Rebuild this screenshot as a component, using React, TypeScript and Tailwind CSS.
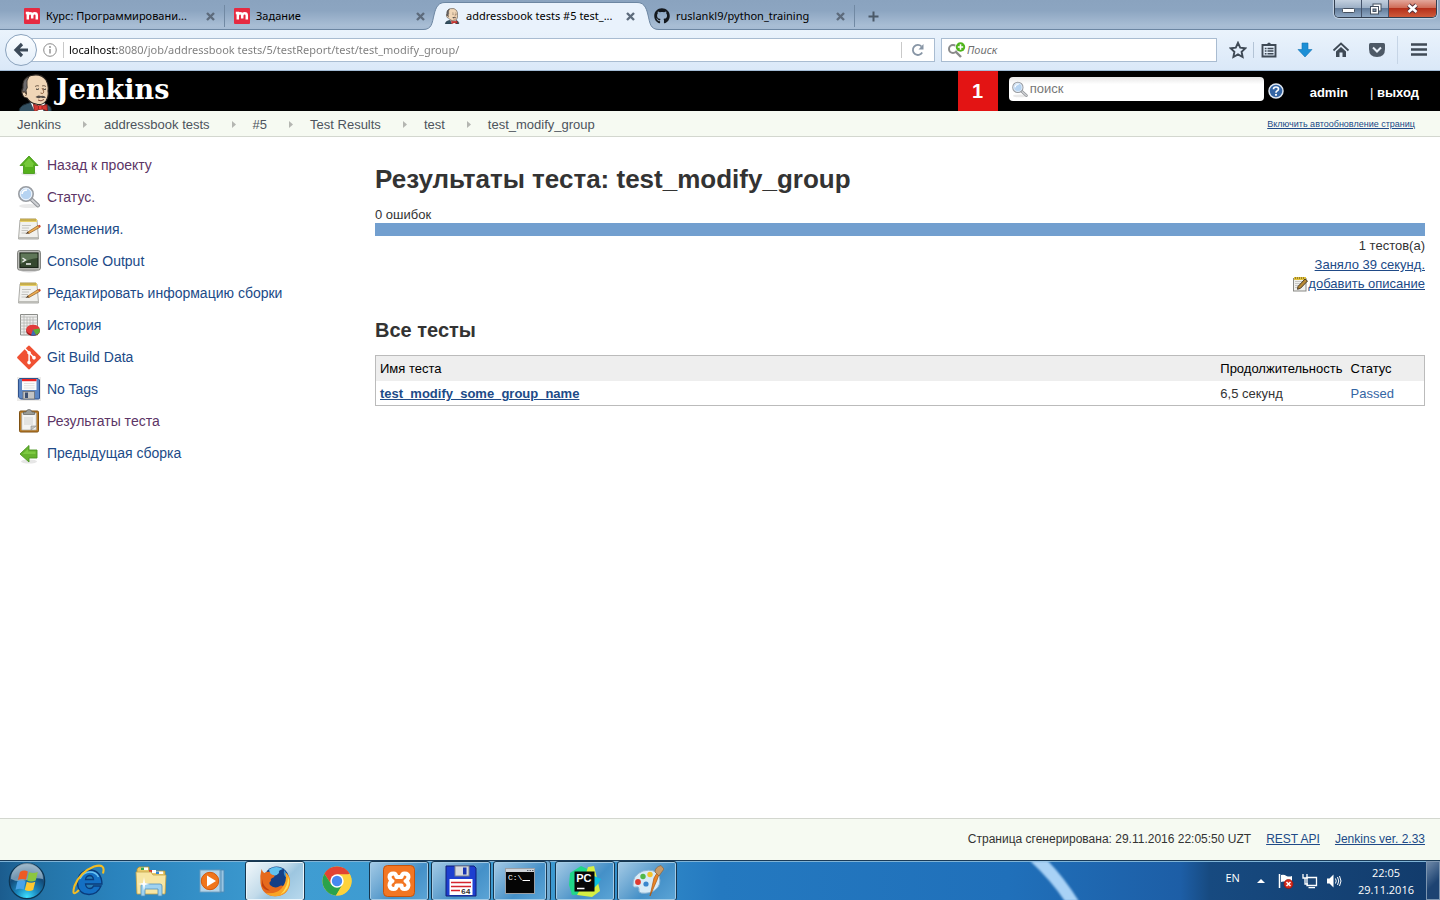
import type { ReactNode } from 'react';
import { FaGithub, FaGitAlt } from 'react-icons/fa';

/* ---------- Shared drawings ---------- */

function Butler({ className }: { className: string }) {
  return (
    <svg viewBox="0 0 34 38" className={className} aria-hidden="true">
      <path d="M1 38 Q1 32 8 30 L14 28 L24 28 L30 31 Q34 33 33 38Z" fill="#335061" stroke="#1b2a33" strokeWidth="1" />
      <path d="M12 27 L17 38 H25 L27 28Z" fill="#fff" />
      <path d="M5 14 Q4 4 13 1.500 Q23 -1 28 6 Q31 11 30 17 Q31 23 28 27 Q24 32 18 30 Q12 29 9 24 Q5 24 4 19 Q3 16 5 14Z" fill="#f0d6b7" stroke="#2a2420" strokeWidth="1.100" />
      <path d="M5 14 Q4 5 11 2.500 Q8 7 9 11 Q10 14 8 16 L8.500 20 Q6 17 5 18 Q3.500 17 5 14Z" fill="#6d6b6d" stroke="#2a2420" strokeWidth=".8" />
      <path d="M4.500 18.500 Q6.500 16.500 8 19 Q9 21 7.500 22" fill="none" stroke="#5b4636" strokeWidth=".9" />
      <path d="M17 12.500 Q19 11 21 12 M24 12 Q26 11 28 12.500" fill="none" stroke="#5b4636" strokeWidth=".8" />
      <path d="M18 15 Q19.500 16 21 14.800 M25 14.800 Q26.500 16 28 15" fill="none" stroke="#222" strokeWidth="1" />
      <path d="M24 14 Q27 18.500 24.500 19.500 L22.500 19" fill="none" stroke="#8a5c3c" strokeWidth="1" />
      <path d="M17.500 23 Q20 20.500 23 22 Q26 21 28 23.500 Q25 24.500 23 23.500 Q20 25 17.500 23Z" fill="#554d48" />
      <path d="M20 26 Q23 28 26 25.500" fill="none" stroke="#7a3b2e" strokeWidth=".9" />
      <path d="M15.500 30 L22 32.500 L29 30.500 L29.500 37 L22.500 34.500 L16.500 38Z" fill="#d33833" stroke="#7d1512" strokeWidth=".8" />
      <rect x="20.500" y="31.500" width="3.500" height="4" rx="1" fill="#ef3d3a" stroke="#7d1512" strokeWidth=".6" />
    </svg>
  );
}

function CourseIcon() {
  return (
    <svg viewBox="0 0 16 16" className="h-4 w-4" aria-hidden="true">
      <rect width="16" height="16" rx="1" fill="#e62a41" />
      <path d="M1.800 5 H3.800 V11.500 M3.800 7.500 Q4.300 5.300 6 5.300 Q8.200 5.300 8.200 7.500 V10.500 M8.200 7.500 Q8.700 5.300 10.700 5.300 Q12.800 5.300 12.800 7.500 V11.500" fill="none" stroke="#fff" strokeWidth="2.500" />
    </svg>
  );
}

function CloseMark() {
  return (
    <svg viewBox="0 0 9 9" className="h-[9px] w-[9px]" aria-hidden="true">
      <path d="M1 1 L8 8 M8 1 L1 8" stroke="#5d6b7c" strokeWidth="2.400" />
    </svg>
  );
}

/* ---------- Browser chrome ---------- */

function Tab({ title, icon, active = false, divider = false }: { title: string; icon: ReactNode; active?: boolean; divider?: boolean }) {
  return (
    <div className="relative flex h-[30px] w-[210px] shrink items-center pb-px pl-[9px] pr-[10px] pt-[3px]">
      {active && (
        <svg viewBox="0 0 236 30" preserveAspectRatio="none" className="absolute -left-3 top-0 h-[30px] w-[236px] max-w-none" aria-hidden="true">
          <path d="M0 30 V29.500 C9 29.500 9 23 11 15 C13 6 16 2.500 22 2.500 H214 C220 2.500 223 6 225 15 C227 23 227 29.500 236 29.500 V30Z" fill="#e9f2fc" />
          <path d="M0 29.500 C9 29.500 9 23 11 15 C13 6 16 2.500 22 2.500 H214 C220 2.500 223 6 225 15 C227 23 227 29.500 236 29.500" fill="none" stroke="#6c86a2" />
        </svg>
      )}
      <a href="#tab" className="relative flex min-w-0 flex-1 items-center gap-1.5">
        <span className="flex h-4 w-4 shrink-0 justify-center">{icon}</span>
        <span className="whitespace-nowrap">{title}</span>
      </a>
      <button aria-label={`Закрыть ${title}`} className="relative ml-2 shrink-0">
        <CloseMark />
      </button>
      {divider && <span className="absolute bottom-[3px] right-0 top-[5px] w-px bg-[#7189a3]" />}
    </div>
  );
}

function WindowControls() {
  return (
    <div className="ml-auto mr-[3px] flex h-[18px] shrink-0 self-start overflow-hidden rounded-b-[5px] border border-t-0 border-[#333f50] shadow-[0_0_1px_1px_#c6d5e5]">
      <button aria-label="Свернуть" className="flex w-[27px] items-center justify-center border-r border-[#45536a] bg-[linear-gradient(#c3d0df,#9db0c6_45%,#637c9a_50%,#90a9c5)]">
        <svg viewBox="0 0 13 6" className="mt-1 h-1.5 w-[13px]" aria-hidden="true"><rect x=".5" y=".5" width="12" height="4" rx="1" fill="#fff" stroke="#45505f" /></svg>
      </button>
      <button aria-label="Развернуть" className="flex w-[27px] items-center justify-center border-r border-[#45536a] bg-[linear-gradient(#c3d0df,#9db0c6_45%,#637c9a_50%,#90a9c5)]">
        <svg viewBox="0 0 13 12" className="h-3 w-[13px]" aria-hidden="true">
          <rect x="4" y="1" width="8" height="7" fill="#fff" stroke="#45505f" />
          <rect x="1.500" y="3.500" width="8" height="7.500" fill="#fff" stroke="#45505f" />
          <rect x="4" y="6" width="3" height="2.500" fill="#8297b2" stroke="#45505f" />
        </svg>
      </button>
      <button aria-label="Закрыть" className="flex w-[47px] items-center justify-center bg-[linear-gradient(#e3a79b,#cf6d58_45%,#b5301a_50%,#cf5a3a)]">
        <svg viewBox="0 0 13 11" className="h-[11px] w-[13px]" aria-hidden="true">
          <path d="M2.500 2 L10.500 9 M10.500 2 L2.500 9" stroke="#53303a" strokeWidth="4.400" />
          <path d="M2.500 2 L10.500 9 M10.500 2 L2.500 9" stroke="#fff" strokeWidth="2.600" />
        </svg>
      </button>
    </div>
  );
}

function TabStrip() {
  return (
    <div className="flex h-[30px] bg-[linear-gradient(#8aa3bf,#8ca5c1_35%,#a8bdd4_85%,#a5bbd3)] pl-[15px] shadow-[inset_0_-1px_0_#6c86a2]">
      <Tab title="Курс: Программировани..." icon={<CourseIcon />} divider />
      <Tab title="Задание" icon={<CourseIcon />} />
      <Tab title="addressbook tests #5 test_..." icon={<Butler className="h-4 w-4" />} active />
      <Tab title="ruslankl9/python_training" icon={<FaGithub className="h-4 w-4 text-[#14181d]" />} divider />
      <button aria-label="Новая вкладка" className="flex w-9 shrink-0 items-center justify-center pt-0.5">
        <svg viewBox="0 0 11 11" className="h-[11px] w-[11px]" aria-hidden="true"><path d="M5.500 0.500 V10.500 M.5 5.500 H10.500" stroke="#4b5968" strokeWidth="2" /></svg>
      </button>
      <WindowControls />
    </div>
  );
}

function ToolButton({ label, children }: { label: string; children: ReactNode }) {
  return (
    <button aria-label={label} className="flex h-[30px] w-9 items-center justify-center">
      <svg viewBox="0 0 18 18" className="h-[18px] w-[18px]" aria-hidden="true">{children}</svg>
    </button>
  );
}

function Toolbar() {
  return (
    <div className="flex h-[41px] items-center border-b border-[#a3bcd6] bg-[linear-gradient(#eaf3fc,#dae8f8)] pl-[5px]">
      <button aria-label="Назад" className="relative z-10 flex h-8 w-8 shrink-0 items-center justify-center rounded-full border border-[#8ba3bd] bg-[linear-gradient(#fbfdff,#e3eefa)]">
        <svg viewBox="0 0 16 16" className="h-4 w-4" aria-hidden="true"><path d="M9 2 L3 8 L9 14 M3.500 8 H15" fill="none" stroke="#3c4a59" strokeWidth="3.200" /></svg>
      </button>
      <div className="-ml-1.5 flex h-6 min-w-0 flex-1 items-center border border-[#a9bcd1] bg-white pl-[11px]">
        <svg viewBox="0 0 14 14" className="h-3.5 w-3.5 shrink-0" aria-hidden="true">
          <circle cx="7" cy="7" r="6.300" fill="none" stroke="#8b8b8b" />
          <path d="M7 6 V10.500" stroke="#8b8b8b" strokeWidth="1.400" />
          <circle cx="7" cy="4" r=".9" fill="#8b8b8b" />
        </svg>
        <span className="ml-1.5 mr-[5px] h-4 w-px shrink-0 bg-[#c9c9c9]" />
        <input
          aria-label="Адрес"
          defaultValue="localhost:8080/job/addressbook tests/5/testReport/test/test_modify_group/"
          className="min-w-0 flex-1 bg-[linear-gradient(90deg,#000_49px,#7b7b7b_49px)] bg-clip-text text-transparent outline-none"
        />
        <button aria-label="Обновить" className="flex h-4 w-[33px] shrink-0 items-center justify-center border-l border-[#c9c9c9]">
          <svg viewBox="0 0 14 14" className="h-3.5 w-3.5" aria-hidden="true">
            <path d="M11.200 9.500 A5 5 0 1 1 10.500 3.500" fill="none" stroke="#8795a5" strokeWidth="1.800" />
            <path d="M12.500 1 V6.500 H7.500Z" fill="#8795a5" />
          </svg>
        </button>
      </div>
      <div className="ml-1.5 flex h-6 w-[276px] shrink-0 items-center border border-[#a9bcd1] bg-white pl-1.5">
        <svg viewBox="0 0 18 17" className="h-[17px] w-[18px] shrink-0" aria-hidden="true">
          <circle cx="5" cy="7" r="4" fill="none" stroke="#8a8a8a" strokeWidth="2" />
          <path d="M8 10 L13 15" stroke="#8a8a8a" strokeWidth="2.400" />
          <circle cx="12.500" cy="5" r="5.400" fill="#fff" />
          <circle cx="12.500" cy="5" r="4.700" fill="#4fb51c" />
          <path d="M12.500 2.300 V7.700 M9.800 5 H15.200" stroke="#fff" strokeWidth="1.600" />
        </svg>
        <input aria-label="Поиск в интернете" placeholder="Поиск" className="min-w-0 flex-1 pl-px italic outline-none placeholder:text-[#6f6f6f]" />
      </div>
      <div className="ml-[3px] flex shrink-0 items-center">
        <ToolButton label="Закладка">
          <path d="M9 1.800 L11.200 6.600 L16.400 7.200 L12.600 10.800 L13.600 16 L9 13.400 L4.400 16 L5.400 10.800 L1.600 7.200 L6.800 6.600Z" fill="none" stroke="#3f4a56" strokeWidth="1.900" />
        </ToolButton>
        <span className="-mx-[3px] h-4 w-px bg-[#b3c4d6]" />
        <ToolButton label="Список закладок">
          <path d="M2.500 4 H15.500 V15.500 H2.500Z" fill="none" stroke="#3f4a56" strokeWidth="1.900" />
          <path d="M5 4.500 V3 H7 Q9 0 11 3 H13 V4.500Z" fill="#3f4a56" />
          <path d="M4.800 7.500 H6.500 M7.500 7.500 H13.500 M4.800 10 H6.500 M7.500 10 H13.500 M4.800 12.700 H6.500 M7.500 12.700 H13.500" stroke="#3f4a56" strokeWidth="1.400" />
        </ToolButton>
        <ToolButton label="Загрузки"><path d="M6 2 H12 V8.500 H16 L9 16 L2 8.500 H6Z" fill="#1c8fd6" stroke="#1273b3" strokeWidth=".6" /></ToolButton>
        <ToolButton label="Домой">
          <path d="M1.500 9.500 L9 2.500 L16.500 9.500" fill="none" stroke="#3f4a56" strokeWidth="1.800" />
          <path d="M4 10.500 L9 6 L14 10.500 V16 H10.500 V11.500 H7.500 V16 H4Z" fill="#3f4a56" />
        </ToolButton>
        <ToolButton label="Pocket">
          <path d="M2.500 2 H15.500 Q17 2 17 3.500 V8 Q17 16 9 16 Q1 16 1 8 V3.500 Q1 2 2.500 2Z" fill="#4d5966" />
          <path d="M5 6.500 L9 10.500 L13 6.500" fill="none" stroke="#e8f0f9" strokeWidth="2" />
        </ToolButton>
        <span className="ml-0.5 mr-[3px] h-7 w-px bg-[#c6d5e6]" />
        <ToolButton label="Меню"><path d="M1 3.500 H17 M1 8.500 H17 M1 13.500 H17" stroke="#3f4a56" strokeWidth="2.400" /></ToolButton>
        <span className="w-[3px]" />
      </div>
    </div>
  );
}

/* ---------- Jenkins page ---------- */

function Magnifier({ className }: { className: string }) {
  return (
    <svg viewBox="0 0 24 24" className={className} aria-hidden="true">
      <ellipse cx="12" cy="21" rx="10" ry="2" fill="#e9e9e9" />
      <path d="M14 14 L21 20.500" stroke="#8f9297" strokeWidth="4" strokeLinecap="round" />
      <path d="M14 14 L21 20.500" stroke="#d0d2d5" strokeWidth="2" strokeLinecap="round" />
      <circle cx="9" cy="9" r="7.200" fill="#c7def5" stroke="#9a9da2" strokeWidth="1.600" />
      <circle cx="9" cy="9" r="5.700" fill="#b6d3f1" stroke="#eef4fb" strokeWidth="1" />
      <path d="M5 9 Q5.500 5 10 5" fill="none" stroke="#fff" strokeWidth="1.500" />
    </svg>
  );
}

function Notepad({ className }: { className: string }) {
  return (
    <svg viewBox="0 0 24 24" className={className} aria-hidden="true">
      <path d="M3 3 H20 L21.500 22 H1.500Z" fill="#f1f1ee" stroke="#a3a39e" strokeWidth=".9" />
      <path d="M1.800 20 H21.200 V22 H1.700Z" fill="#bdbdb8" />
      <rect x="3" y="2" width="17" height="3" fill="#e6cf67" />
      <path d="M4 1 V4 M6 1 V4 M8 1 V4 M10 1 V4 M12 1 V4 M14 1 V4 M16 1 V4 M18 1 V4" stroke="#94792a" strokeWidth=".8" />
      <path d="M5 8.500 H14 M5 11 H12 M4.500 13.500 H11 M4.500 16 H9" stroke="#c4c4c0" strokeWidth="1" />
      <path d="M10 15.500 L21 8.500 L22.500 10.500 L12 16.500Z" fill="#efae55" stroke="#8b5a1e" strokeWidth=".7" />
      <path d="M21 8.500 L22.500 7.800 Q24 8.800 23.700 9.900 L22.500 10.500Z" fill="#cf4a2c" />
      <path d="M8.500 17 L10.500 14.800 L12.300 16.300Z" fill="#4e3a26" />
    </svg>
  );
}

function SmallNotepad() {
  return (
    <svg viewBox="0 0 15 16" className="h-4 w-[15px]" aria-hidden="true">
      <rect x=".5" y="2.500" width="12.500" height="12.500" fill="#f0f0ee" stroke="#8a8a86" />
      <path d="M2 5.500 H10 M2 7.500 H9 M2 9.500 H7 M2 11.500 H6" stroke="#bdbdb9" strokeWidth=".8" />
      <rect x="1" y="1" width="12" height="3" fill="#e2c33f" />
      <path d="M2.500 1 V3 M4.500 1 V3 M6.500 1 V3 M8.500 1 V3 M10.500 1 V3" stroke="#8b7220" strokeWidth=".8" />
      <path d="M5 10.500 L12 3 L14.500 5 L7.500 12.300 L4.500 13.300Z" fill="#b98a35" stroke="#3b2d17" strokeWidth=".9" />
    </svg>
  );
}

function ConsoleIcon() {
  return (
    <svg viewBox="0 0 24 24" className="h-6 w-6" aria-hidden="true">
      <ellipse cx="12" cy="22" rx="8" ry="1.500" fill="#d8d8d8" />
      <rect x=".6" y="1.600" width="22.800" height="19.500" rx="2" fill="#c4c5c0" stroke="#797a76" strokeWidth="1" />
      <rect x="3" y="4" width="18" height="14.500" fill="#35482f" stroke="#1c2519" strokeWidth="1.200" />
      <path d="M3.600 4.600 H20.400 V9 Q11 10 3.600 15Z" fill="#5f7758" />
      <path d="M5.500 9 L8.500 11 L5.500 13 M9 15 H14" fill="none" stroke="#f4f4f4" strokeWidth="1.300" />
    </svg>
  );
}

function HistoryIcon() {
  return (
    <svg viewBox="0 0 24 24" className="h-6 w-6" aria-hidden="true">
      <path d="M3.500 1.500 H20.500 V22 H3.500Z" fill="#efefee" stroke="#8b8d89" />
      <path d="M3.500 4 H20.500 M7 1.500 V22 M10 4 V22 M13 4 V22 M16 4 V22 M3.500 7 H20.500 M3.500 10 H20.500 M3.500 13 H20.500 M3.500 16 H20.500 M3.500 19 H20.500" stroke="#b2b4b0" strokeWidth=".8" />
      <ellipse cx="16" cy="18" rx="6.800" ry="5" fill="#9a1616" />
      <ellipse cx="16" cy="16.500" rx="6.800" ry="4.800" fill="#e23b3b" />
      <path d="M16 16.500 L22.500 15.500 A6.300 5 0 0 1 19 22Z" fill="#5fae35" />
      <path d="M16 16.500 L19 22 A6 5 0 0 1 14 22.500Z" fill="#3b6cb5" />
    </svg>
  );
}

function FloppyIcon() {
  return (
    <svg viewBox="0 0 24 24" className="h-6 w-6" aria-hidden="true">
      <rect width="24" height="24" fill="#ecebe9" />
      <path d="M2.500 1.500 H21 L22.500 3 V21 Q22.500 22 21.500 22 H3.500 L1.500 20 V2.500Z" fill="#5d87c4" stroke="#2f518c" />
      <rect x="5" y="2" width="14.500" height="11" fill="#fbfbfb" />
      <rect x="5" y="2" width="14.500" height="2.200" fill="#ee2222" />
      <path d="M7 6.500 H17.500 M7 8.700 H17.500 M7 11 H17.500" stroke="#dedede" strokeWidth=".9" />
      <rect x="6" y="14.500" width="11.500" height="7.500" fill="#c3c4c4" stroke="#6e7174" strokeWidth=".8" />
      <rect x="8" y="15.500" width="3" height="5.500" fill="#3c4f71" />
    </svg>
  );
}

function ClipboardIcon() {
  return (
    <svg viewBox="0 0 24 24" className="h-6 w-6" aria-hidden="true">
      <rect x="2.500" y="2" width="19" height="21" rx="1.200" fill="#bd7d26" stroke="#7f5112" />
      <path d="M4.700 4 H19.300 V21 H4.700Z" fill="#f4f4f3" stroke="#a4a49f" strokeWidth=".7" />
      <path d="M7 8 H16 V16 H7Z" fill="#e3e3e1" />
      <path d="M14 21 V17 H19.300Z" fill="#c4c4c0" stroke="#8e8e8a" strokeWidth=".6" />
      <path d="M6.500 3 H9 Q9.500 .5 12 .5 Q14.500 .5 15 3 H17.500 V5.500 H6.500Z" fill="#9a9c97" stroke="#5d5f5b" strokeWidth=".7" />
    </svg>
  );
}

function GreenArrow({ left = false }: { left?: boolean }) {
  return (
    <svg viewBox="0 0 24 24" className="h-6 w-6" aria-hidden="true">
      <ellipse cx="12" cy="20.500" rx="8" ry="2" fill="#e6e6e6" />
      {left ? (
        <path d="M3 13 L12 4.500 V9 H20 V17 H12 V21Z" fill="#66b32e" stroke="#4a9420" strokeWidth=".9" />
      ) : (
        <path d="M12 3 L21 12.500 H17.500 V20.500 H6.500 V12.500 H3Z" fill="#55b01c" stroke="#4b9b1e" strokeWidth=".9" />
      )}
      <path d={left ? 'M5.500 13 L11 8 V10.500 H18.500 V13Z' : 'M12 5 L17.500 11.500 H16 V14 H8 V11.500 H6Z'} fill="#8cd84f" fillOpacity=".6" />
    </svg>
  );
}

function GitIcon() {
  return <FaGitAlt className="h-[27px] w-6 shrink-0 text-[#f05133]" />;
}

const tasks: { label: string; icon: ReactNode; visited?: boolean }[] = [
  { label: 'Назад к проекту', icon: <GreenArrow />, visited: true },
  { label: 'Статус.', icon: <Magnifier className="h-6 w-6" />, visited: true },
  { label: 'Изменения.', icon: <Notepad className="h-6 w-6" /> },
  { label: 'Console Output', icon: <ConsoleIcon /> },
  { label: 'Редактировать информацию сборки', icon: <Notepad className="h-6 w-6" /> },
  { label: 'История', icon: <HistoryIcon /> },
  { label: 'Git Build Data', icon: <GitIcon /> },
  { label: 'No Tags', icon: <FloppyIcon /> },
  { label: 'Результаты теста', icon: <ClipboardIcon />, visited: true },
  { label: 'Предыдущая сборка', icon: <GreenArrow left /> },
];

const crumbs = ['Jenkins', 'addressbook tests', '#5', 'Test Results', 'test', 'test_modify_group'];

function PageHeader() {
  return (
    <header className="flex h-10 shrink-0 items-center bg-black pl-[18px] text-[13px] font-bold text-white">
      <a href="#home" className="flex h-10 items-center overflow-hidden font-['DejaVu_Serif',serif] text-[27px] leading-10">
        <Butler className="mt-1 h-[38px] w-[34px]" />
        <span className="ml-1 pb-0.5">Jenkins</span>
      </a>
      <a href="#alerts" className="ml-auto flex h-10 w-10 items-center justify-center bg-[#e31414] text-xl">1</a>
      <form className="ml-[11px] flex items-center pb-1" onSubmit={(e) => e.preventDefault()}>
        <label className="flex h-6 w-[255px] items-center rounded bg-[linear-gradient(#e6e6e6,#fff_30%)] pl-0.5">
          <Magnifier className="h-[17px] w-[18px]" />
          <input aria-label="поиск" placeholder="поиск" className="min-w-0 flex-1 pl-px font-normal text-black outline-none placeholder:text-[#777]" />
        </label>
      </form>
      <a href="#help" aria-label="Справка" className="ml-1">
        <svg viewBox="0 0 16 16" className="h-4 w-4" aria-hidden="true">
          <circle cx="8" cy="8" r="7" fill="#3465a4" stroke="#dfe7f2" strokeWidth="1.500" />
          <path d="M5.500 6.300 Q5.500 4 8 4 Q10.500 4 10.500 6 Q10.500 7.200 9 8 Q8 8.500 8 9.700" fill="none" stroke="#fff" strokeWidth="1.700" />
          <circle cx="8" cy="11.800" r="1.100" fill="#fff" />
        </svg>
      </a>
      <a href="#admin" className="ml-[26px] pt-1">admin</a>
      <span className="ml-[22px] mr-[21px] pt-1"><span className="font-normal">|</span> <a href="#logout">выход</a></span>
    </header>
  );
}

function Breadcrumbs() {
  return (
    <nav aria-label="Навигация" className="flex h-[26px] shrink-0 items-center border-b border-[#d3d7cf] bg-[#f6faf2] pl-[17px] pr-[25px] pt-0.5 text-[13px] text-[#4d545d]">
      <ol className="flex">
        {crumbs.map((crumb, i) => (
          <li key={crumb} className="flex items-center">
            {i > 0 && (
              <svg viewBox="0 0 5 7" className="ml-[22px] mr-4 h-[7px] w-[5px]" aria-hidden="true"><path d="M0 0 L4 3.500 L0 7Z" fill="#b4b6b1" /></svg>
            )}
            <a href="#crumb">{crumb}</a>
          </li>
        ))}
      </ol>
      <a href="#refresh" className="ml-auto text-[9px] text-[#204a87] underline">Включить автообновление страниц</a>
    </nav>
  );
}

function Results() {
  return (
    <main className="min-w-0 flex-1 pr-[15px] text-[13px] leading-[19px] text-[#333]">
      <h1 className="pt-[27px] text-[26px] font-bold leading-[30px]">Результаты теста: test_modify_group</h1>
      <p className="mt-3 text-[13px] leading-[17px]">0 ошибок</p>
      <div className="h-[13px] bg-[#729fcf]" />
      <div className="flex flex-col items-end">
        <p>1 тестов(а)</p>
        <a href="#duration" className="text-[#204a87] underline">Заняло 39 секунд.</a>
        <a href="#describe" className="flex items-center text-[#204a87] underline">
          <SmallNotepad />
          добавить описание
        </a>
      </div>
      <h2 className="mt-[25px] text-xl font-bold leading-6">Все тесты</h2>
      <table className="mt-[13px] w-full border border-[#bbb] text-left">
        <thead className="bg-[#eee] text-black">
          <tr className="h-[25px]">
            <th className="px-1 font-normal">Имя теста</th>
            <th className="w-32 px-1 font-normal">Продолжительность</th>
            <th className="w-[78px] px-1 font-normal">Статус</th>
          </tr>
        </thead>
        <tbody>
          <tr className="h-[25px]">
            <td className="px-1 pt-0.5"><a href="#test" className="font-bold text-[#204a87] underline">test_modify_some_group_name</a></td>
            <td className="px-1 pt-0.5">6,5 секунд</td>
            <td className="px-1 pt-0.5 text-[#3465a4]">Passed</td>
          </tr>
        </tbody>
      </table>
    </main>
  );
}

/* ---------- Desktop taskbar ---------- */

function StartOrb() {
  return (
    <svg viewBox="0 0 38 38" className="h-[38px] w-[38px]" aria-hidden="true">
      <defs>
        <radialGradient id="orb" cx=".5" cy=".95" r=".9">
          <stop offset="0" stopColor="#3ee0ff" /><stop offset=".35" stopColor="#1a86bd" /><stop offset=".7" stopColor="#134a78" /><stop offset="1" stopColor="#6b8ea8" />
        </radialGradient>
      </defs>
      <circle cx="19" cy="19" r="17.700" fill="url(#orb)" stroke="#0d3553" strokeWidth="1.200" />
      <path d="M3 17 A16 16 0 0 1 35 17 Q27 15 19 18 Q10 21 3 17Z" fill="#cfdfe9" fillOpacity=".5" />
      <path d="M12 10 Q16 7.500 19.800 9.500 L18 17.800 Q14 16 9.800 18Z" fill="#ee5a24" />
      <path d="M21 10 Q25 12 29.800 10 L27.700 18.500 Q23 20.500 19.200 18.500Z" fill="#8cc63f" />
      <path d="M9.300 19.500 Q14 17.500 17.600 19.300 L15.700 27.500 Q12 25.800 7.500 27.800Z" fill="#4aa3e8" />
      <path d="M18.800 19.800 Q23 21.800 27.300 19.800 L25.200 28 Q21 30 16.800 28Z" fill="#fdc82f" />
    </svg>
  );
}

function ExplorerE() {
  return (
    <svg viewBox="0 0 34 34" className="h-[34px] w-[34px]" aria-hidden="true">
      <path d="M29 22 Q25.500 30.500 17 30.500 Q6 30 5.500 19 Q6 7 17.500 6 Q29.500 6.500 30 20 H13.500 Q14 24.500 18 24.500 Q20.500 24.500 21.500 22Z M13.500 15.500 H21.500 Q21 11.500 17.500 11.500 Q14 12 13.500 15.500Z" fill="#1470c4" stroke="#0a3c7c" strokeWidth="1.300" fillRule="evenodd" />
      <path d="M8 15 Q11 8 18 8 Q24 8 26.500 13" fill="none" stroke="#6bc4f2" strokeWidth="1.500" />
      <path d="M7 26 Q-1 34 2.500 22 Q8 8 22 2.500 Q34 -1 31 9.500" fill="none" stroke="#f3bd24" strokeWidth="2.100" />
    </svg>
  );
}

function FolderIcon() {
  return (
    <svg viewBox="0 0 34 32" className="h-8 w-[34px]" aria-hidden="true">
      <path d="M3 4 L5 2 H15 V6 H31 V28 H3Z" fill="#e8ca6b" stroke="#b08f35" strokeWidth=".8" />
      <path d="M7 2.500 H14 V5 H7Z" fill="#fff" /><path d="M7 2.500 H10 V5 H7Z" fill="#35a853" />
      <path d="M15 5 H22 V8 H15Z" fill="#fff" /><path d="M15 5 H18 V8 H15Z" fill="#d63c2e" />
      <path d="M22 6.500 H29 V9 H22Z" fill="#fff" /><path d="M22 6.500 H25 V9 H22Z" fill="#3388d8" />
      <path d="M2 7 H17 L19 10 H32 L31 29 H3Z" fill="#f7e6a4" stroke="#c4a54b" strokeWidth=".8" />
      <path d="M7 31 V21 Q7 19 9 19 H26 Q28 19 28 21 V31 H24 V24 H11 V31Z" fill="#9fd2f0" stroke="#528fbb" strokeWidth=".8" />
      <path d="M4 19 L9 18 L10 12 L11 18 L16 19 L11 20 L10 26 L9 20Z" fill="#fff" />
    </svg>
  );
}

function MediaIcon() {
  return (
    <svg viewBox="0 0 28 26" className="h-[26px] w-7" aria-hidden="true">
      <path d="M19 2 H25 V24 H19Z M16 2 H22 V24 H16Z" fill="#9ac5e2" stroke="#4f8db7" strokeWidth=".9" />
      <rect x="1" y="2" width="20" height="22" fill="#b5d4e8" stroke="#6a9dbf" strokeWidth=".9" />
      <circle cx="11" cy="13" r="8.700" fill="#f0751b" stroke="#d65a0b" />
      <path d="M8 7.500 L17 13 L8 18.500Z" fill="#fff" />
    </svg>
  );
}

function FirefoxIcon() {
  return (
    <svg viewBox="0 0 32 32" className="h-8 w-8" aria-hidden="true">
      <circle cx="17.500" cy="14" r="12.500" fill="#143f86" />
      <path d="M10 4.500 Q17 0 24 4 Q19 5 20 8 Q16 13 11 9Z" fill="#5fc0ee" />
      <path d="M25 5 Q29 9 28 13 Q24 11 25 5Z" fill="#3a92d4" />
      <path d="M2.500 4 Q3.500 7 5.500 8 Q8 6 11 7 Q11 9.500 14.500 10 Q16.500 11 14.500 12.500 Q11 13.500 12 16 Q9.500 17 11 20 Q15 24 20 21.500 Q22 20 24 21 Q27 19 27.500 15 Q28 11 26.500 7.500 Q31 11 31 17.500 Q29.500 31 16 31.300 Q3 30.500 1.500 18 Q.8 10 2.500 4Z" fill="#e66a1c" />
      <path d="M26.500 7.500 Q32 12 31 18.500 Q28.500 31 16 31.300 Q10 31 6.500 28 Q17 29.500 22.500 23.500 Q28.500 17 26.500 7.500Z" fill="#f9a526" />
      <path d="M29 12 Q31.500 17 28.500 23 Q26 27.500 21.500 29.500 Q29 22 29 12Z" fill="#ffdf58" />
      <path d="M3 14 Q4 22 11 25.500 Q6 25.500 3 21Z" fill="#c2410f" />
    </svg>
  );
}

function ChromeIcon() {
  return (
    <svg viewBox="0 0 30 30" className="h-[30px] w-[30px]" aria-hidden="true">
      <circle cx="15" cy="15" r="14.500" fill="#fdd23c" />
      <path d="M15 15 L27.600 7.800 A14.500 14.500 0 0 0 2.400 7.800 L9.300 18.300Z" fill="#e24333" />
      <path d="M2.400 7.800 A14.500 14.500 0 0 0 14 29.500 L20.700 18.300 L15 15 L9.300 18.300Z" fill="#2ba24c" />
      <path d="M15 8.300 H27.900 A14.500 14.500 0 0 1 14 29.500 L20.700 18.300Z" fill="#fdd23c" />
      <circle cx="15" cy="15" r="6.700" fill="#fff" />
      <circle cx="15" cy="15" r="5.200" fill="#4688f1" />
    </svg>
  );
}

function XamppIcon() {
  return (
    <svg viewBox="0 0 32 32" className="h-8 w-8" aria-hidden="true">
      <rect x=".5" y=".5" width="31" height="31" rx="4" fill="#f37623" stroke="#c4540d" />
      <path d="M10.500 8.500 Q6.500 8.500 6.500 12 Q7 15 9.500 16 Q6.500 17 6.500 20.500 Q7 24 10.500 24 Q13.500 24 13.500 20.500 H18.500 Q18.500 24 21.500 24 Q25 24 25.500 20.500 Q25.500 17 22.500 16 Q25 15 25.500 12 Q25.500 8.500 21.500 8.500 Q19 8.500 18.500 12 H13.500 Q13 8.500 10.500 8.500Z" fill="none" stroke="#fff" strokeWidth="4" strokeLinejoin="round" />
    </svg>
  );
}

function CommanderIcon() {
  return (
    <svg viewBox="0 0 32 32" className="h-8 w-8" aria-hidden="true">
      <path d="M1 1 H29 L31 3 V31 H1Z" fill="#1d3fd0" stroke="#101f77" />
      <rect x="10" y="1" width="14" height="10" fill="#d6d9de" stroke="#79808c" />
      <rect x="18" y="2.500" width="3.500" height="7" fill="#1a35b0" />
      <rect x="4.500" y="14" width="23" height="16" fill="#fff" />
      <path d="M6 17.500 H26 M6 21.500 H26 M6 25.500 H15" stroke="#d4232c" strokeWidth="1.300" />
      <text x="16" y="29" fontSize="8" fontFamily="Liberation Mono, monospace" fontWeight="bold" fill="#333">64</text>
    </svg>
  );
}

function TerminalIcon() {
  return (
    <svg viewBox="0 0 30 26" className="h-[26px] w-[30px]" aria-hidden="true">
      <rect x=".5" y=".5" width="29" height="25" fill="#050505" stroke="#9aa0a6" />
      <rect x="1" y="1" width="28" height="3" fill="#cfd3d7" />
      <path d="M22 2.500 H23.500 M24.500 2.500 H26 M27 2.500 H28.500" stroke="#59616a" />
      <text x="3" y="12" fontSize="8" fontFamily="Liberation Mono, monospace" fill="#fff">C:\</text>
      <path d="M17.500 12.500 H25" stroke="#fff" />
    </svg>
  );
}

function PyCharmIcon() {
  return (
    <svg viewBox="0 0 34 34" className="h-[34px] w-[34px]" aria-hidden="true">
      <path d="M2 9 L13 2 L24 7 L18 30 L4 31 L1 21Z" fill="#21d789" />
      <path d="M20 3 L26 2 L28 10 L32 27 L24 33 L9 31 L14 22Z" fill="#d7ef43" />
      <path d="M26 12 L33 15 L30 20 L26 24Z" fill="#0bbfe0" />
      <rect x="6.500" y="7.500" width="20" height="20" fill="#080808" />
      <text x="8.200" y="18" fontSize="11" fontFamily="Liberation Sans, sans-serif" fontWeight="bold" fill="#fff">PC</text>
      <path d="M9 24.500 H16.500" stroke="#fff" strokeWidth="1.500" />
    </svg>
  );
}

function PaintIcon() {
  return (
    <svg viewBox="0 0 34 34" className="h-[34px] w-[34px]" aria-hidden="true">
      <path d="M3 22 Q2 11 13 7 Q25 4 29 12 Q32 21 25 26 Q20 30 11 29 Q8 28 9 25 Q9 22 6 23 Q4 23.500 3 22Z" fill="#d8ebf7" stroke="#8db4d2" />
      <circle cx="8" cy="18" r="2.900" fill="#e03a2f" />
      <circle cx="13" cy="12.500" r="2.700" fill="#51b848" />
      <circle cx="20" cy="10.500" r="2.700" fill="#f4c32c" />
      <circle cx="16" cy="20" r="2.600" fill="#3a86cc" />
      <path d="M20 32 L24 14 L27 9 L29 10 L27 16Z" fill="#ea8527" stroke="#a9540f" strokeWidth=".7" />
      <path d="M25 8 Q25 3 31 1.500 L34 5 Q31 9 29 12Z" fill="#c99b67" stroke="#8b643c" strokeWidth=".7" />
    </svg>
  );
}

const apps: { name: string; icon: ReactNode; state?: 'open' | 'active' | 'stacked' }[] = [
  { name: 'Internet Explorer', icon: <ExplorerE /> },
  { name: 'Проводник', icon: <FolderIcon /> },
  { name: 'Media Player', icon: <MediaIcon /> },
  { name: 'Firefox', icon: <FirefoxIcon />, state: 'active' },
  { name: 'Chrome', icon: <ChromeIcon /> },
  { name: 'XAMPP', icon: <XamppIcon />, state: 'open' },
  { name: 'Total Commander', icon: <CommanderIcon />, state: 'open' },
  { name: 'Командная строка', icon: <TerminalIcon />, state: 'stacked' },
  { name: 'PyCharm', icon: <PyCharmIcon />, state: 'open' },
  { name: 'Paint', icon: <PaintIcon />, state: 'open' },
];

const appStyles = {
  idle: 'w-[60px]',
  open: 'w-[60px] rounded-[3px] border border-[#16364f] bg-[linear-gradient(135deg,#a5cbe6,#5f9fce_45%,#4490c8_60%,#5ca5d6)] shadow-[inset_0_0_0_1px_#a3cbe6]',
  active: 'w-[60px] rounded-[3px] border border-[#16364f] bg-[linear-gradient(135deg,#f3f8fb,#c2dbea_45%,#9dc6e0_60%,#b9daee)] shadow-[inset_0_0_0_1px_#eaf5fb]',
  stacked: 'w-[54px] mr-1.5 rounded-[3px] border border-[#16364f] bg-[linear-gradient(135deg,#a5cbe6,#5f9fce_45%,#4490c8_60%,#5ca5d6)] shadow-[inset_0_0_0_1px_#a3cbe6,3px_0_0_0_#6fa9d1,4px_0_0_0_#16364f]',
};

function Taskbar() {
  return (
    <div className="relative flex h-10 shrink-0 items-center overflow-hidden border-t border-[#1a3b58] bg-[linear-gradient(90deg,#1b5c8e,#2474a8_3%,#2a83bd_8%,#3f9dd2_20%,#3b98d0_40%,#2479c0_50%,#2070ba_70%,#1d5ea6_82%,#174a80_84%,#123b6b)] pl-2 shadow-[inset_0_1px_0_#7fb3d6]">
      <svg viewBox="0 0 60 40" className="absolute left-[71%] top-0 h-10 w-[60px] blur-[1px]" aria-hidden="true">
        <path d="M6 -2 H24 Q42 16 58 42 H44 Q30 20 6 -2Z" fill="#a9d2f6" />
      </svg>
      <button aria-label="Пуск" className="mr-[13px] shrink-0"><StartOrb /></button>
      <div className="flex gap-0.5">
        {apps.map((app) => (
          <button key={app.name} aria-label={app.name} className={`flex h-10 shrink-0 items-center justify-center ${appStyles[app.state ?? 'idle']}`}>
            {app.icon}
          </button>
        ))}
      </div>
      <div className="relative ml-auto flex h-full items-center font-['Open_Sans',sans-serif] text-xs leading-[17px] text-white">
        <button className="pb-1.5 text-[11px]">EN</button>
        <button aria-label="Скрытые значки" className="ml-[17px]">
          <svg viewBox="0 0 8 4" className="h-1 w-2" aria-hidden="true"><path d="M0 4 L4 0 L8 4Z" fill="#fff" /></svg>
        </button>
        <svg viewBox="0 0 16 16" className="ml-[13px] h-4 w-4" aria-hidden="true">
          <path d="M1.500 1 V15" stroke="#fff" strokeWidth="1.500" />
          <path d="M3 2 Q6 1 8.500 3 Q11 4 14 3 V9 Q10 10 8 9 Q5 8 3 9Z" fill="#fff" />
          <circle cx="10.500" cy="11" r="4.500" fill="#d92a1c" stroke="#8e1309" strokeWidth=".7" />
          <path d="M8.500 9 L12.500 13 M12.500 9 L8.500 13" stroke="#fff" strokeWidth="1.500" />
        </svg>
        <svg viewBox="0 0 16 16" className="ml-2 h-4 w-4" aria-hidden="true">
          <path d="M5 4.500 H14.500 V12.500 H5Z" fill="#1c4675" stroke="#fff" strokeWidth="1.300" />
          <path d="M6.500 14.700 H13 M1 1 V5 H5 V1 M3 5 V11 H6" fill="none" stroke="#fff" strokeWidth="1.300" />
        </svg>
        <svg viewBox="0 0 16 16" className="ml-2 h-4 w-4" aria-hidden="true">
          <path d="M1 5.500 H3.500 L7.500 1.500 V14.500 L3.500 10.500 H1Z" fill="#fff" />
          <path d="M9.500 5.500 Q11 8 9.500 10.500 M11.500 4 Q14 8 11.500 12 M13.500 3 Q16.500 8 13.500 13" fill="none" stroke="#fff" />
        </svg>
        <time className="ml-4 mr-3 text-center text-[11px]">22:05<br />29.11.2016</time>
        <button aria-label="Показать рабочий стол" className="h-full w-3.5 border border-[#7c95b0] bg-[linear-gradient(135deg,#6f89a8,#1d4372_60%)]" />
      </div>
    </div>
  );
}

export default function App() {
  return (
    <div className="flex min-h-screen flex-col bg-white font-['Liberation_Sans',Arial,sans-serif]">
      <div className="shrink-0 font-['Noto_Sans',sans-serif] text-[11px] text-black">
        <TabStrip />
        <Toolbar />
      </div>
      <PageHeader />
      <Breadcrumbs />
      <div className="flex flex-1">
        <nav aria-label="Действия" className="w-[375px] shrink-0 pl-[17px] pt-3">
          <ul>
            {tasks.map((task) => (
              <li key={task.label}>
                <a href="#task" className={`flex h-8 items-center gap-1.5 text-sm ${task.visited ? 'text-[#5c3566]' : 'text-[#204a87]'}`}>
                  {task.icon}
                  {task.label}
                </a>
              </li>
            ))}
          </ul>
        </nav>
        <Results />
      </div>
      <footer className="flex h-[42px] shrink-0 items-center justify-end gap-[15px] border-t border-[#d3d7cf] bg-[#f6faf2] pb-0.5 pr-[15px] text-xs text-[#333]">
        <span>Страница сгенерирована: 29.11.2016 22:05:50 UZT</span>
        <a href="#api" className="text-[#204a87] underline">REST API</a>
        <a href="#version" className="text-[#204a87] underline">Jenkins ver. 2.33</a>
      </footer>
      <Taskbar />
    </div>
  );
}
